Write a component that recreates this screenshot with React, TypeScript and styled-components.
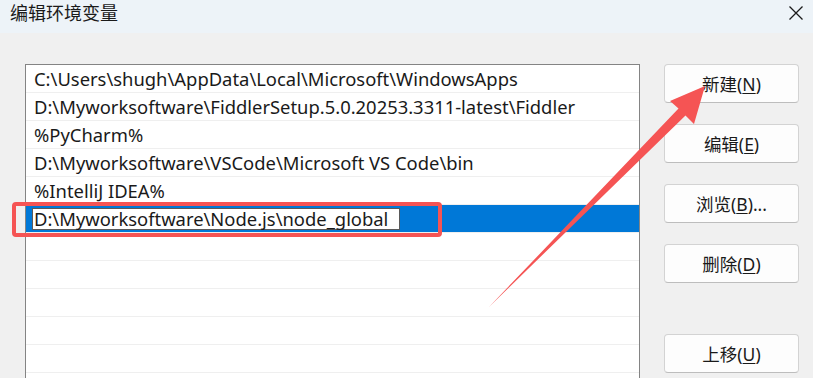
import styled, { createGlobalStyle } from 'styled-components'

const GlobalStyle = createGlobalStyle`
    html, body {
        margin: 0;
        padding: 0;
        background: #f0f0f0;
        overflow: hidden;
    }

    body {
        font-family: "Noto Sans", "Noto Sans CJK SC", sans-serif;
        color: #1a1a1a;
    }
`

const StyledDialog = styled.div`
    position: relative;
    width: 813px;
    height: 378px;
    overflow: hidden;
    background: #f0f0f0;
`

const TitleBar = styled.div`
    height: 33px;
    display: flex;
    align-items: flex-start;
    justify-content: space-between;
    background: #edf3f8;
    padding: 0 8px 0 10px;
    box-sizing: border-box;

    h1 {
        margin: 0;
        font-family: "Noto Sans CJK SC", sans-serif;
        font-weight: 400;
        font-size: 18px;
        line-height: 25px;
        color: #1a1a1a;
    }
`

const CloseButton = styled.div`
    width: 16px;
    height: 16px;
    margin-top: 4px;
    margin-right: 1px;
`

const Body = styled.div`
    display: flex;
    gap: 24px;
    padding: 31px 14px 0 25px;
`

const PathList = styled.div`
    width: 615px;
    height: 360px;
    box-sizing: border-box;
    border: 1px solid #848484;
    border-bottom: none;
    background: #fff;
`

const Row = styled.div<{ $selected?: boolean }>`
    height: 28px;
    box-sizing: border-box;
    border-bottom: 1px solid #efefef;
    display: flex;
    align-items: center;
    padding-left: 8px;
    font-size: 18.4px;
    white-space: nowrap;
    background: ${(props) => (props.$selected ? '#0078d7' : '#fff')};
`

const EditBox = styled.div`
    width: 368px;
    height: 22px;
    margin-left: -2px;
    box-sizing: border-box;
    border: 1px solid #5a5a5a;
    background: #fff;
    display: flex;
    align-items: center;
    padding-left: 1px;
    font-size: 18.4px;
`

const ButtonColumn = styled.div`
    display: flex;
    flex-direction: column;
    gap: 21px;

    .spacer {
        height: 9px;
    }
`

const Button = styled.div`
    width: 135px;
    height: 39px;
    box-sizing: border-box;
    border: 1px solid #d3d3d3;
    border-bottom-color: #bdbdbd;
    border-radius: 4px;
    background: #fdfdfd;
    display: flex;
    align-items: center;
    justify-content: center;
    font-family: "Noto Sans", "Noto Sans CJK SC", sans-serif;
    font-size: 17.5px;
    color: #1a1a1a;

    u {
        text-underline-offset: 2px;
    }
`

const Highlight = styled.div`
    position: absolute;
    left: 12px;
    top: 202px;
    width: 430px;
    height: 35px;
    box-sizing: border-box;
    border: 4px solid #f55454;
    border-radius: 4px;
`

const Overlay = styled.svg`
    position: absolute;
    left: 0;
    top: 0;
    pointer-events: none;
`

const paths = [
    'C:\\Users\\shugh\\AppData\\Local\\Microsoft\\WindowsApps',
    'D:\\Myworksoftware\\FiddlerSetup.5.0.20253.3311-latest\\Fiddler',
    '%PyCharm%',
    'D:\\Myworksoftware\\VSCode\\Microsoft VS Code\\bin',
    '%IntelliJ IDEA%',
]

const App = () => {
    return <StyledDialog>
        <GlobalStyle />

        <TitleBar>
            <h1>编辑环境变量</h1>

            <CloseButton>
                <svg width="16" height="16" viewBox="0 0 16 16">
                    <path d="M1.5 1.5 L14.5 14.5 M14.5 1.5 L1.5 14.5" stroke="#1a1a1a" strokeWidth="1.3" />
                </svg>
            </CloseButton>
        </TitleBar>

        <Body>
            <PathList>
                {paths.map((p) => <Row key={p}>{p}</Row>)}

                <Row $selected>
                    <EditBox>D:\Myworksoftware\Node.js\node_global</EditBox>
                </Row>

                {Array.from({ length: 6 }).map((_, i) => <Row key={i} />)}
            </PathList>

            <ButtonColumn>
                <Button>新建(<u>N</u>)</Button>
                <Button>编辑(<u>E</u>)</Button>
                <Button>浏览(<u>B</u>)...</Button>
                <Button>删除(<u>D</u>)</Button>
                <div className="spacer" />
                <Button>上移(<u>U</u>)</Button>
            </ButtonColumn>
        </Body>

        <Highlight />

        <Overlay width="813" height="378" viewBox="0 0 813 378">
            <polygon
                points="489,307 678.5,108.5 670,101 705,86 694,124 685.5,115.5"
                fill="#f55454"
            />
        </Overlay>
    </StyledDialog>
}

export default App
